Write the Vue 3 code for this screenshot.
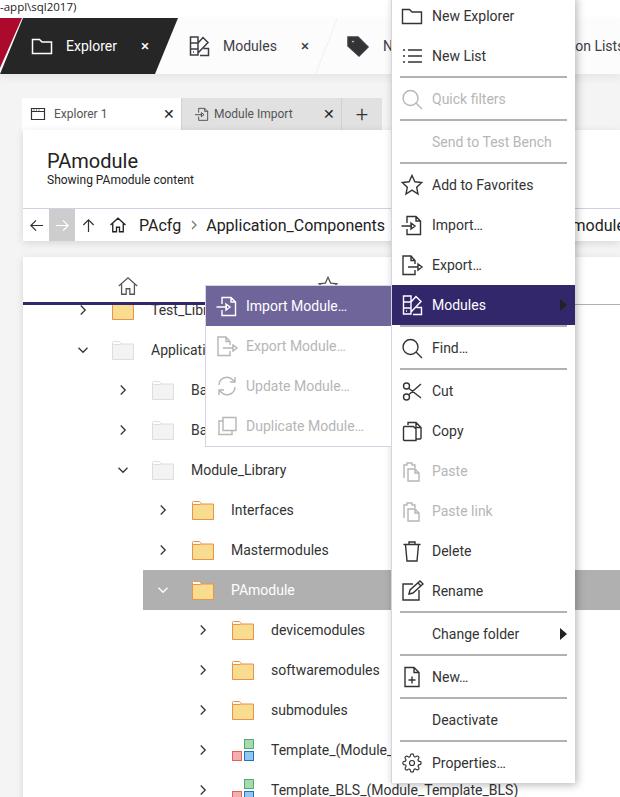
<template>
  <div class="app">
    <div class="titlebar">-appl\sql2017)</div>

    <nav class="maintabs">
      <div v-for="tab in mainTabs" :key="tab.label" class="maintab" :class="[tab.cls, { active: tab.active }]">
        <svg class="icon" viewBox="0 0 24 24"><path :d="icons[tab.icon]" /></svg>
        <span class="maintab-label">{{ tab.label }}</span>
        <span v-if="tab.close" class="maintab-close">×</span>
      </div>
    </nav>

    <main class="content">
      <div class="subtabs">
        <div class="subtab active">
          <svg class="subtab-icon" viewBox="0 0 16 16"><path d="M1.500 2.500h13v11h-13z M1.500 5.500h13 M3.500 4h1 M6 4h1 M8.500 4h1" /></svg>
          <span class="subtab-label">Explorer 1</span>
          <span class="subtab-close">✕</span>
        </div>
        <div class="subtab">
          <svg class="subtab-icon" viewBox="0 0 24 24"><path :d="icons.import" /></svg>
          <span class="subtab-label">Module Import</span>
          <span class="subtab-close">✕</span>
        </div>
        <div class="subtab plus">+</div>
      </div>

      <section class="card head">
        <div class="head-text">
          <h1>PAmodule</h1>
          <p>Showing PAmodule content</p>
        </div>
        <div class="crumbbar">
          <button type="button" class="navbtn"><svg viewBox="0 0 16 16"><path d="M15 8H2 M7.500 2.500 2 8l5.500 5.500" /></svg></button>
          <button type="button" class="navbtn off"><svg viewBox="0 0 16 16"><path d="M1 8h13 M8.500 2.500 14 8l-5.500 5.500" /></svg></button>
          <button type="button" class="navbtn"><svg viewBox="0 0 16 16"><path d="M8 15V2 M2.500 7.500 8 2l5.500 5.500" /></svg></button>
          <svg class="crumb-home" viewBox="0 0 24 24"><path :d="icons.home" /></svg>
          <template v-for="(c, i) in crumbs" :key="c">
            <span v-if="i" class="crumb-sep" :class="{ wide: i > 1 }"><svg viewBox="0 0 8 10"><path d="M2 1l4 4-4 4" /></svg></span>
            <span class="crumb">{{ c }}</span>
          </template>
        </div>
      </section>

      <section class="card tree-card">
        <div class="viewtabs">
          <div class="viewtab active"><svg viewBox="0 0 24 24"><path :d="icons.home" /></svg></div>
          <div class="viewtab fav"><svg viewBox="0 0 24 24"><path :d="icons.star" /></svg></div>
          <div class="viewtab-rest"></div>
        </div>
        <div class="tree">
          <div v-for="row in rows" :key="row.label" class="row" :class="[`lv${row.level}`, { selected: row.selected }]">
            <svg class="chev" viewBox="0 0 16 16"><path :d="row.open ? 'M2 5l6 6 6-6' : 'M5 2l6 6-6 6'" /></svg>
            <svg v-if="row.kind === 'template'" class="node" viewBox="0 0 22 22">
              <rect class="t-green" x="12.500" y="0.500" width="9" height="9" />
              <rect class="t-blue" x="12.500" y="12.500" width="9" height="9" />
              <rect class="t-red" x="0.500" y="12.500" width="9" height="9" />
            </svg>
            <svg v-else class="node" :class="{ grey: row.kind === 'grey' }" viewBox="0 0 22 22">
              <path class="f-tab" d="M0.500 6V3.500q0-1 1-1h6l2 2.500" />
              <path class="f-body" d="M0.500 5.500h8l1-.5h12v15.500h-21z" />
            </svg>
            <span class="row-label">{{ row.label }}</span>
          </div>
        </div>
      </section>
    </main>

    <div class="menu">
      <template v-for="item in menu" :key="item.label || item.id">
        <div v-if="item.sep" class="sep"></div>
        <div v-else class="item" :class="{ off: item.off, hot: item.hot }">
          <svg class="icon" :class="item.icon" viewBox="0 0 24 24"><path v-if="item.icon" :d="icons[item.icon]" /></svg>
          <span>{{ item.label }}</span>
          <i v-if="item.arrow" class="arrow"></i>
          <div v-if="item.hot" class="submenu">
            <div v-for="sub in submenu" :key="sub.label" class="item" :class="{ off: sub.off, subhot: !sub.off }">
              <svg class="icon" viewBox="0 0 24 24"><path :d="icons[sub.icon]" /></svg>
              <span>{{ sub.label }}</span>
            </div>
          </div>
        </div>
      </template>
    </div>
  </div>
</template>

<script setup>
const icons = {
  folder: 'M2.500 5.500h7l2.500 2.500h9.500v11.500h-19z',
  list: 'M3 6h2 M3 12h2 M3 18h2 M8 6h14 M8 12h14 M8 18h14',
  search: 'M10.500 3.500a7.500 7.500 0 1 1 0 15a7.500 7.500 0 0 1 0-15z M16 16l6 6',
  star: 'M12 2.500l2.900 6.300 6.800.8-5 4.700 1.300 6.800L12 17.200l-6 3.900 1.300-6.800-5-4.700 6.800-.8z',
  import: 'M7 10V3.500h9l4.500 4.500v13.500H7V16 M16 3.500V8h4.500 M1.500 13h10.500 M11 10l4 3-4 3z',
  export: 'M15 11V7.500l-4-4.500H3v18.500h12V17 M11 3v4.500h4 M8 14h10 M18 11l4 3-4 3z',
  modules: 'M3.500 3h7.500v18H3.500z M3.500 9h7.500 M3.500 15h7.500 M11 9l5-5.500 5 5-10 10.500 M13 21.500h8.500V14.500h-5 M6 18h1',
  cut: 'M6.500 4a3 3 0 1 1 0 6a3 3 0 0 1 0-6z M6.500 15a3 3 0 1 1 0 6a3 3 0 0 1 0-6z M9 9.500L21 19 M9 15.500L21 5',
  copy: 'M8 6V3.500h8l5 5v10.500a1 1 0 0 1-1 1h-4 M16 3.500v5h5 M4.500 7.500h9l2.500 2.500v11.500H4.500q-1 0-1-1v-12q0-1 1-1z',
  paste: 'M4 19V6h3V4h5v2h3v3 M8 10h7l4 4v8H8z M15 10v4h4',
  trash: 'M3.500 5.500h17 M9 5.500V3h6v2.500 M5.500 5.500l1.500 16.500h10l1.500-16.500',
  rename: 'M13 5H3v16h16V11 M9 15l1-4L20 2l3 3-10 9z M18 4l3 3',
  newdoc: 'M5 2.500h9l5 5v14H5z M14 2.500v5h5 M12 11.500v7 M8.500 15h7',
  gear: 'M19.400 15a1.650 1.650 0 0 0 .33 1.820l.06.06a2 2 0 0 1 0 2.830 2 2 0 0 1-2.830 0l-.06-.06a1.650 1.650 0 0 0-1.820-.33 1.650 1.650 0 0 0-1 1.510V21a2 2 0 0 1-2 2 2 2 0 0 1-2-2v-.09A1.650 1.650 0 0 0 9 19.400a1.650 1.650 0 0 0-1.820.33l-.06.06a2 2 0 0 1-2.830 0 2 2 0 0 1 0-2.830l.06-.06a1.650 1.650 0 0 0 .33-1.820 1.650 1.650 0 0 0-1.510-1H3a2 2 0 0 1-2-2 2 2 0 0 1 2-2h.09A1.650 1.650 0 0 0 4.600 9a1.650 1.650 0 0 0-.33-1.820l-.06-.06a2 2 0 0 1 0-2.830 2 2 0 0 1 2.830 0l.06.06a1.650 1.650 0 0 0 1.820.33H9a1.650 1.650 0 0 0 1-1.510V3a2 2 0 0 1 2-2 2 2 0 0 1 2 2v.09a1.650 1.650 0 0 0 1 1.510 1.650 1.650 0 0 0 1.820-.33l.06-.06a2 2 0 0 1 2.830 0 2 2 0 0 1 0 2.830l-.06.06a1.650 1.650 0 0 0-.33 1.820V9a1.650 1.650 0 0 0 1.510 1H21a2 2 0 0 1 2 2 2 2 0 0 1-2 2h-.09a1.650 1.650 0 0 0-1.510 1z M12 9a3 3 0 1 1 0 6a3 3 0 0 1 0-6z',
  home: 'M2 12L12 3l10 9 M5 10v11h5v-6h4v6h5V10',
  tag: 'M2 3h10l10 10-9 9L2 12z M7 6a1.500 1.500 0 1 0 .01 0z',
  update: 'M4 11a8 8 0 0 1 14-5l2 2 M20 3v5h-5 M20 13a8 8 0 0 1-14 5l-2-2 M4 21v-5h5',
  duplicate: 'M8 3.500h13v13H8z M8 7H4v13.500h13V16.500'
}

const mainTabs = [
  { label: 'Explorer', icon: 'folder', close: true, active: true, cls: 'first' },
  { label: 'Modules', icon: 'modules', close: true, cls: 'second' },
  { label: 'Names', icon: 'tag', close: true, cls: 'third' },
  { label: 'Comparison Lists', icon: 'list', cls: 'fourth' }
]

const crumbs = ['PAcfg', 'Application_Components', 'Module_Library', 'PAmodule']

const rows = [
  { label: 'Test_Library', level: 1 },
  { label: 'Application_Components', level: 1, open: true, kind: 'grey' },
  { label: 'Base_Library', level: 2, kind: 'grey' },
  { label: 'Basic_Modules', level: 2, kind: 'grey' },
  { label: 'Module_Library', level: 2, open: true, kind: 'grey' },
  { label: 'Interfaces', level: 3 },
  { label: 'Mastermodules', level: 3 },
  { label: 'PAmodule', level: 3, open: true, selected: true },
  { label: 'devicemodules', level: 4 },
  { label: 'softwaremodules', level: 4 },
  { label: 'submodules', level: 4 },
  { label: 'Template_(Module_Template)', level: 4, kind: 'template' },
  { label: 'Template_BLS_(Module_Template_BLS)', level: 4, kind: 'template' }
]

const menu = [
  { label: 'New Explorer', icon: 'folder' },
  { label: 'New List', icon: 'list' },
  { sep: true, id: 's1' },
  { label: 'Quick filters', icon: 'search', off: true },
  { sep: true, id: 's2' },
  { label: 'Send to Test Bench', off: true },
  { sep: true, id: 's3' },
  { label: 'Add to Favorites', icon: 'star' },
  { label: 'Import…', icon: 'import' },
  { label: 'Export…', icon: 'export' },
  { label: 'Modules', icon: 'modules', hot: true, arrow: true },
  { sep: true, id: 's4' },
  { label: 'Find…', icon: 'search' },
  { sep: true, id: 's5' },
  { label: 'Cut', icon: 'cut' },
  { label: 'Copy', icon: 'copy' },
  { label: 'Paste', icon: 'paste', off: true },
  { label: 'Paste link', icon: 'paste', off: true },
  { label: 'Delete', icon: 'trash' },
  { label: 'Rename', icon: 'rename' },
  { sep: true, id: 's6' },
  { label: 'Change folder', arrow: true },
  { sep: true, id: 's7' },
  { label: 'New…', icon: 'newdoc' },
  { sep: true, id: 's8' },
  { label: 'Deactivate' },
  { sep: true, id: 's9' },
  { label: 'Properties…', icon: 'gear' }
]

const submenu = [
  { label: 'Import Module…', icon: 'import' },
  { label: 'Export Module…', icon: 'export', off: true },
  { label: 'Update Module…', icon: 'update', off: true },
  { label: 'Duplicate Module…', icon: 'duplicate', off: true }
]
</script>

<style>
html, body {
  margin: 0;
  overflow: hidden;
}
</style>

<style scoped>
.app {
  position: relative;
  width: 620px;
  height: 797px;
  overflow: hidden;
  background: #f4f4f4;
  font-family: Roboto, "Liberation Sans", sans-serif;
  color: #333;
}
svg {
  fill: none;
  stroke: currentColor;
}
.titlebar {
  height: 18px;
  background: #fff;
  font-family: "Open Sans", sans-serif;
  font-size: 11.500px;
  line-height: 13px;
  color: #222;
  white-space: nowrap;
}

.maintabs {
  position: relative;
  display: flex;
  height: 56px;
  background: #fcfcfc;
  box-shadow: 0 4px 8px rgba(0, 0, 0, 0.06);
  overflow: hidden;
}
.maintabs::before {
  content: "";
  position: absolute;
  left: 0;
  top: 0;
  width: 22px;
  height: 50px;
  background: #ab0a2c;
  clip-path: polygon(0 0, 100% 0, 0 100%);
}
.maintab {
  position: relative;
  display: flex;
  flex: none;
  align-items: center;
  box-sizing: border-box;
  height: 56px;
  font-size: 14px;
  color: #3c3c46;
  white-space: nowrap;
}
.maintab .icon {
  width: 24px;
  height: 24px;
  stroke-width: 1.500;
  flex: none;
}
.maintab-close {
  position: absolute;
  font-size: 15px;
  font-weight: 500;
}
.first {
  width: 178px;
  padding-left: 30px;
  background: #262626;
  color: #fff;
  clip-path: polygon(23px 0, 100% 0, 155px 100%, 0 100%);
}
.first .maintab-label {
  margin-left: 12px;
}
.first .maintab-close {
  left: 141px;
}
.second {
  width: 160px;
  padding-left: 9px;
}
.second::after {
  content: "";
  position: absolute;
  right: 0;
  top: 0;
  bottom: 0;
  width: 23px;
  background: #f0f0f0;
  clip-path: polygon(22px 0, 23px 0, 1px 100%, 0 100%);
}
.second .maintab-label {
  margin-left: 12px;
}
.second .maintab-close {
  left: 123px;
}
.third {
  width: 133px;
  padding-left: 8px;
}
.third .maintab-label {
  margin-left: 13px;
}
.third .maintab-close {
  left: 100px;
}
.third .icon {
  fill: #333;
  fill-rule: evenodd;
}
.fourth {
  padding-left: 10px;
}
.fourth .maintab-label {
  margin-left: 10px;
}

.content {
  display: flex;
  flex-direction: column;
  align-items: stretch;
  padding: 24px 0 0 23px;
}
.subtabs {
  display: flex;
  height: 32px;
  margin-left: -1px;
  font-size: 12px;
}
.subtab {
  display: flex;
  align-items: center;
  box-sizing: border-box;
  width: 160px;
  padding-left: 12px;
  background: #e1e1e1;
  border-left: 1px solid #cfcfdf;
  color: #555;
}
.subtab.active {
  width: 159px;
  padding-left: 8px;
  background: #fff;
  border-left: 0;
}
.subtab-icon {
  width: 16px;
  height: 16px;
  stroke: #333;
  stroke-width: 1.200;
  flex: none;
}
.subtab-label {
  margin-left: 8px;
  flex: 1;
}
.subtab:not(.active) .subtab-label {
  margin-left: 4px;
}
.subtab-close {
  width: 18px;
  font-size: 14px;
  color: #222;
}
.subtab.plus {
  justify-content: center;
  width: 41px;
  padding: 0;
  font-size: 22px;
  font-weight: 300;
  color: #333;
}
.card {
  background: #fff;
  box-shadow: 0 2px 8px rgba(0, 0, 0, 0.12);
}
.head-text {
  box-sizing: border-box;
  height: 78px;
  padding: 19px 24px 0;
  color: #222;
}
.head-text h1 {
  margin: 0;
  font-size: 20px;
  font-weight: 400;
  line-height: 24px;
}
.head-text p {
  margin: 0;
  font-size: 12px;
  line-height: 14px;
}
.crumbbar {
  display: flex;
  align-items: center;
  height: 32px;
  border-top: 1px solid #d0d0e2;
  font-size: 16px;
  color: #222;
  white-space: nowrap;
  overflow: hidden;
}
.navbtn {
  display: flex;
  flex: none;
  align-items: center;
  justify-content: center;
  width: 26px;
  height: 32px;
  padding: 0;
  border: 0;
  background: none;
  color: #333;
}
.navbtn svg {
  width: 15px;
  height: 15px;
  stroke-width: 1.300;
}
.navbtn.off {
  background: #cdcdcd;
  color: #fff;
}
.crumb-home {
  width: 18px;
  height: 18px;
  margin-left: 8px;
  margin-right: 12px;
  stroke-width: 1.800;
  flex: none;
}
.crumb {
  flex: none;
}
.crumb-sep {
  display: flex;
  justify-content: center;
  flex: none;
  width: 25px;
  color: #777;
}
.crumb-sep.wide {
  width: 29px;
}
.crumb-sep svg {
  width: 8px;
  height: 10px;
  stroke-width: 1.300;
}
.tree-card {
  height: 560px;
  margin-top: 16px;
  overflow: hidden;
}
.viewtabs {
  position: relative;
  z-index: 1;
  display: flex;
  height: 48px;
  background: #fff;
}
.viewtab {
  display: flex;
  justify-content: center;
  box-sizing: border-box;
  width: 210px;
  padding-top: 18px;
  border-bottom: 1px solid #b0b0b0;
  color: #555;
}
.viewtab.fav {
  width: 190px;
}
.viewtab.active {
  border-bottom: 3px solid #33276b;
}
.viewtab svg {
  width: 22px;
  height: 22px;
  stroke-width: 1.400;
}
.viewtab-rest {
  flex: 1;
  border-bottom: 1px solid #b0b0b0;
}
.tree {
  margin-top: -15px;
}
.row {
  display: flex;
  align-items: center;
  height: 40px;
  font-size: 14px;
  color: #333;
  white-space: nowrap;
}
.lv1 { margin-left: 40px; }
.lv2 { margin-left: 80px; }
.lv3 { margin-left: 120px; }
.lv4 { margin-left: 160px; }
.row.selected {
  background: #b0b0b0;
  color: #fff;
}
.chev {
  width: 12px;
  height: 12px;
  margin: 0 14px;
  stroke-width: 1.700;
  flex: none;
}
.node {
  width: 22px;
  height: 22px;
  margin: 0 17px 0 9px;
  flex: none;
}
.f-tab {
  fill: #fff;
  stroke: #e8924a;
}
.f-body {
  fill: #f8dc8f;
  stroke: #e8924a;
}
.node.grey .f-tab {
  stroke: #dedede;
}
.node.grey .f-body {
  fill: #f3f3f3;
  stroke: #dedede;
}
.t-green {
  fill: #a8d8b0;
  stroke: #4caf70;
}
.t-blue {
  fill: #90c8f0;
  stroke: #2070c0;
}
.t-red {
  fill: #f4b0b0;
  stroke: #e06060;
}

.menu {
  position: absolute;
  z-index: 5;
  left: 391px;
  top: -4px;
  width: 184px;
  box-sizing: border-box;
  border-left: 1px solid #d4d4e4;
  background: #fff;
  box-shadow: 2px 2px 8px rgba(0, 0, 0, 0.28);
  font-size: 14px;
}
.item {
  position: relative;
  display: flex;
  align-items: center;
  height: 40px;
  padding-left: 8px;
  color: #333;
  white-space: nowrap;
}
.item .icon {
  width: 24px;
  height: 24px;
  margin-right: 8px;
  stroke-width: 1.400;
  flex: none;
}
.item .icon.gear {
  width: 20px;
  height: 20px;
  margin: 0 10px 0 2px;
}
.item.off {
  color: #b6b6b6;
}
.item.hot {
  background: #33276b;
  color: #fff;
}
.sep {
  height: 2px;
  margin: 0 8px 1px;
  background: #b2b2b2;
}
.arrow {
  position: absolute;
  right: 8px;
  top: 14px;
  border-left: 7px solid #222;
  border-top: 6px solid transparent;
  border-bottom: 6px solid transparent;
}
.submenu {
  position: absolute;
  right: 100%;
  top: 0;
  width: 187px;
  box-sizing: border-box;
  border: 1px solid #d4d4e4;
  background: #fff;
}
.submenu .item {
  padding-left: 9px;
}
.submenu .icon {
  margin-right: 7px;
}
.item.subhot {
  background: #70659a;
  color: #fff;
}
</style>
